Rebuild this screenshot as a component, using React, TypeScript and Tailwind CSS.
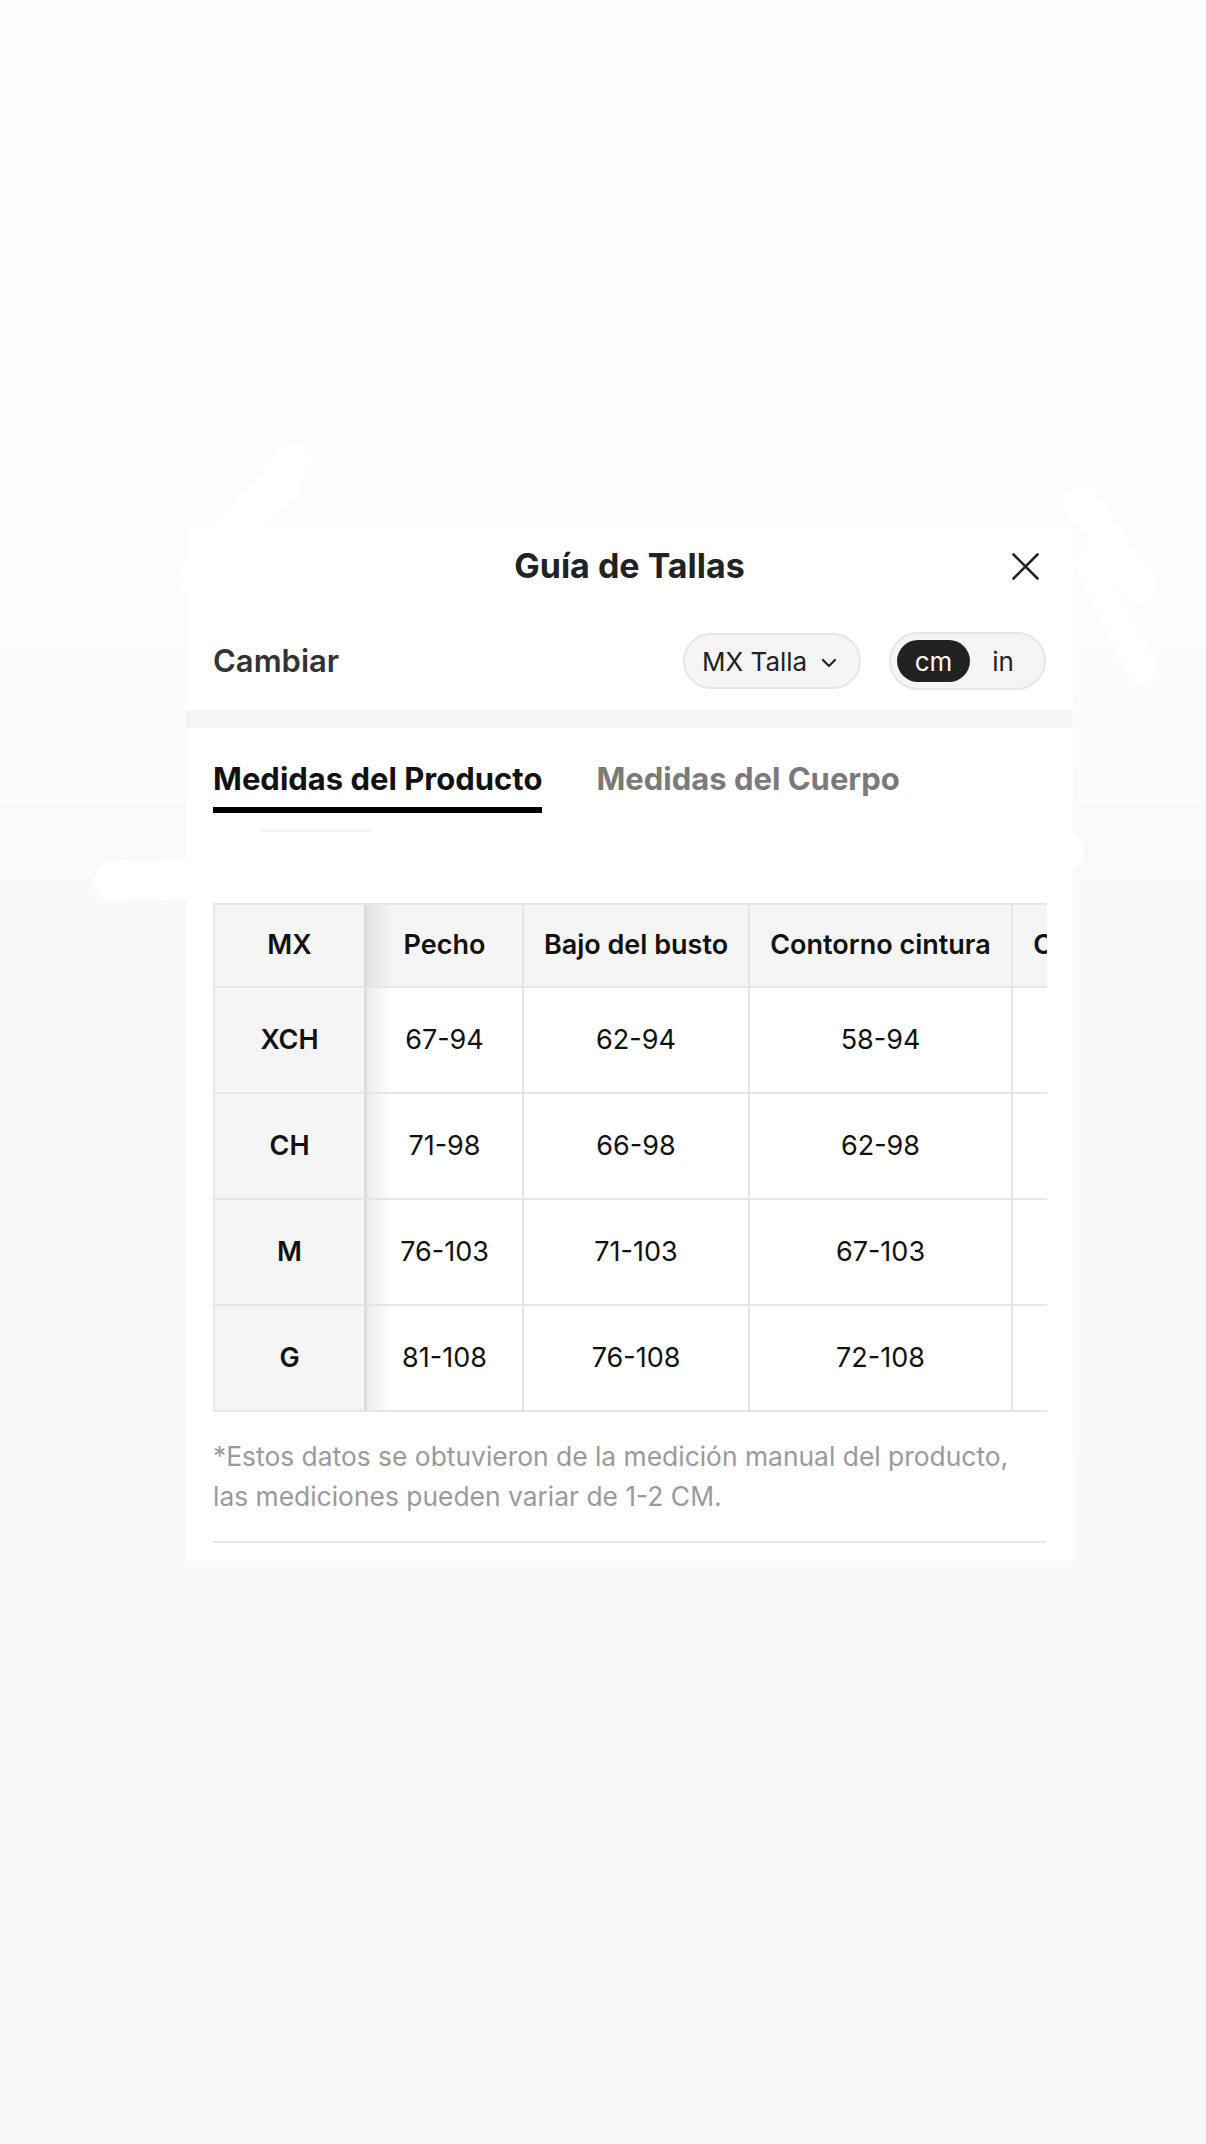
const headers = ["Pecho", "Bajo del busto", "Contorno cintura", "Contorno cadera"];

const rows = [
  { size: "XCH", values: ["67-94", "62-94", "58-94", "70-98"] },
  { size: "CH", values: ["71-98", "66-98", "62-98", "74-102"] },
  { size: "M", values: ["76-103", "71-103", "67-103", "79-107"] },
  { size: "G", values: ["81-108", "76-108", "72-108", "84-112"] },
];

const cell = "flex items-center justify-center border-r-2 border-b-2 border-[#e6e6e6] whitespace-nowrap";
const labelCell = "flex items-center justify-center border-r-[3px] border-b-2 border-b-[#e6e6e6] border-r-[#dcdcdc] bg-[#f5f5f5] font-semibold";
const shadowCell = "bg-[linear-gradient(to_right,rgba(0,0,0,0.07),rgba(0,0,0,0)_26px)]";

const Chevron = () => (
  <svg width="16" height="10" viewBox="0 0 16 10" fill="none" className="mt-[3px]">
    <path d="M2 2l6 6 6-6" stroke="#222" strokeWidth="2.2" strokeLinecap="round" strokeLinejoin="round" />
  </svg>
);

const CloseIcon = () => (
  <svg width="27" height="27" viewBox="0 0 27 27" fill="none">
    <path d="M1.5 1.5l24 24M25.5 1.5l-24 24" stroke="#222" strokeWidth="2.6" strokeLinecap="round" />
  </svg>
);

const SizeTable = () => (
  <div className="w-[834px] overflow-hidden">
    <div className="grid w-max grid-cols-[152px_157px_226px_263px_262px] border-l-2 border-t-2 border-[#e6e6e6] text-[27px] text-[#111]">
      {/* header row */}
      <div className={`${labelCell} h-[83px]`}>MX</div>
      {headers.map((h, i) => (
        <div key={h} className={`${cell} h-[83px] bg-[#f5f5f5] font-semibold ${i === 0 ? shadowCell : ""}`}>
          {h}
        </div>
      ))}
      {rows.map((r) => (
        <div key={r.size} className="contents">
          <div className={`${labelCell} h-[106px]`}>{r.size}</div>
          {r.values.map((v, i) => (
            <div key={i} className={`${cell} h-[106px] bg-white ${i === 0 ? shadowCell : ""}`}>
              {v}
            </div>
          ))}
        </div>
      ))}
    </div>
  </div>
);

export default function App() {
  return (
    <div className="relative min-h-[2144px] overflow-hidden bg-[linear-gradient(to_bottom,#fcfcfc_0px,#fbfbfb_803px,#f9f9f9_803px,#f8f8f8_2144px)] pt-[528px] font-[family-name:Inter,_sans-serif]">
      {/* faint white smudges around the sheet */}
      <div className="absolute left-[150px] top-[500px] h-[38px] w-[190px] -rotate-[50deg] rounded-full bg-white" />
      <div className="absolute left-[190px] top-[500px] h-[30px] w-[120px] -rotate-[35deg] rounded-full bg-white" />
      <div className="absolute left-[1040px] top-[525px] h-[36px] w-[140px] rotate-[55deg] rounded-full bg-white" />
      <div className="absolute left-[1040px] top-[600px] h-[30px] w-[150px] rotate-[63deg] rounded-full bg-white" />
      <div className="absolute left-[94px] top-[846px] h-[40px] w-[990px] -rotate-[1.8deg] rounded-full bg-white" />

      <div className="relative ml-[186px] w-[887px] bg-white pb-[18px]">
        {/* title */}
        <div className="grid h-[76px] grid-cols-[1fr_auto_1fr] items-center">
          <div />
          <h1 className="text-[34px] font-bold leading-none text-[#222]">Guía de Tallas</h1>
          <div className="flex justify-end pr-[34px]">
            <CloseIcon />
          </div>
        </div>

        {/* controls */}
        <div className="flex items-center justify-between px-[27px] pb-[20px] pt-[28px]">
          <span className="text-[31px] font-semibold text-[#333]">Cambiar</span>
          <div className="flex items-center gap-[28px] text-[26px] text-[#222]">
            <button className="flex h-[56px] w-[178px] items-center gap-[14px] rounded-full border-2 border-[#e6e6e6] bg-[#f5f5f5] pl-[17px]">
              MX Talla
              <Chevron />
            </button>
            <div className="flex h-[58px] items-center rounded-full border-2 border-[#e6e6e6] bg-[#f5f5f5] pl-[6px] pr-[8px]">
              <span className="flex h-[42px] w-[73px] items-center justify-center rounded-full bg-[#222] text-white">cm</span>
              <span className="flex w-[66px] items-center justify-center">in</span>
            </div>
          </div>
        </div>

        <div className="h-[18px] bg-[#f5f5f5]" />

        {/* tabs */}
        <div className="px-[27px] pt-[31px]">
          <div className="flex gap-[54px] text-[31px] font-bold leading-[40px]">
            <div className="flex flex-col">
              <span className="text-[#111]">Medidas del Producto</span>
              <span className="mt-[8px] h-[6px] bg-black" />
            </div>
            <span className="text-[#7a7a7a]">Medidas del Cuerpo</span>
          </div>

          <div className="ml-[48px] mt-[16px] h-[3px] w-[112px] rounded-full bg-[#eef4fb]" />

          <div className="mt-[71px]">
            <SizeTable />
          </div>

          <p className="mt-[24px] text-[26.4px] leading-[40px] text-[#9a9a9a]">
            *Estos datos se obtuvieron de la medición manual del producto,
            <br />
            las mediciones pueden variar de 1-2 CM.
          </p>

          <div className="mt-[25px] h-[2px] bg-[#e8e8e8]" />
        </div>
      </div>
    </div>
  );
}
